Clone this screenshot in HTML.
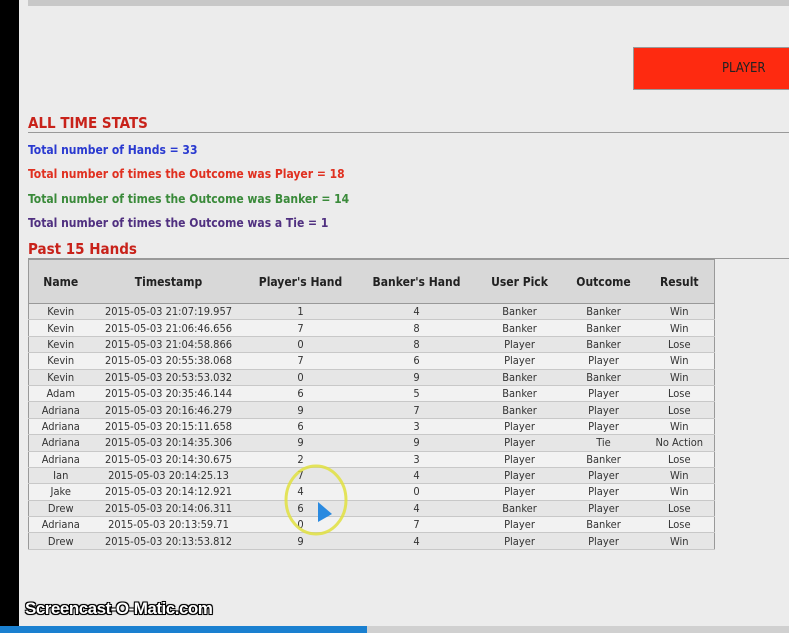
<!DOCTYPE html>
<html><head><style>
body{margin:0;width:789px;height:633px;background:#ececec;position:relative;overflow:hidden;font-family:"DejaVu Sans Condensed","Liberation Sans",sans-serif;}
.blk{position:absolute;left:0;top:0;width:19px;height:626px;background:#000}
.topbar{position:absolute;left:28px;top:0;width:761px;height:6px;background:#c8c8c8}
.btn{position:absolute;left:633px;top:47px;width:160px;height:43px;background:#fe2a10;border:1px solid #999;box-sizing:border-box;font-size:13px;color:#222;line-height:41px;padding-left:88px}
h2{position:absolute;left:28px;margin:0;font-size:15px;font-weight:bold;color:#c8221a}
.line{position:absolute;left:28px;right:0;height:1px;background:#999}
.s{position:absolute;left:28px;font-size:12px;font-weight:bold}
table{position:absolute;left:28px;top:259px;width:686px;table-layout:fixed;border-collapse:collapse;border:1px solid #999;font-size:11px;color:#333}
th{background:#d8d8d8;height:43px;font-weight:bold;color:#222;border-bottom:1px solid #999;font-size:12px;padding:0}
td{height:15.4px;padding:0;text-align:center;border-bottom:1px solid #c8c8c8;background:#f2f2f2;white-space:nowrap}
tr:nth-child(even) td{background:#e6e6e6}
.wm{position:absolute;left:25px;top:599px;font:bold 17px "Liberation Sans",sans-serif;color:#fff;text-shadow:0 0 2px #000,1px 1px 0 #000,-1px -1px 0 #000,1px -1px 0 #000,-1px 1px 0 #000;letter-spacing:-0.5px}
.bb{position:absolute;left:0;top:626px;width:789px;height:7px;background:#d0d0d0}
.bb div{width:367px;height:7px;background:#1a80d0}
</style></head><body>
<div class="blk"></div><div class="topbar"></div>
<div class="btn">PLAYER</div>
<h2 style="top:114px">ALL TIME STATS</h2>
<div class="line" style="top:132px"></div>
<div class="s" style="top:143px;color:#2a3ad0">Total number of Hands = 33</div>
<div class="s" style="top:167px;color:#e03020">Total number of times the Outcome was Player = 18</div>
<div class="s" style="top:192px;color:#3a8a3a">Total number of times the Outcome was Banker = 14</div>
<div class="s" style="top:216px;color:#503080">Total number of times the Outcome was a Tie = 1</div>
<h2 style="top:240px">Past 15 Hands</h2>
<div class="line" style="top:258px"></div>
<table>
<colgroup><col style="width:64px"><col style="width:152px"><col style="width:112px"><col style="width:120px"><col style="width:86px"><col style="width:82px"><col style="width:70px"></colgroup>
<tr><th>Name</th><th>Timestamp</th><th>Player's Hand</th><th>Banker's Hand</th><th>User Pick</th><th>Outcome</th><th>Result</th></tr>
<tr><td>Kevin</td><td>2015-05-03 21:07:19.957</td><td>1</td><td>4</td><td>Banker</td><td>Banker</td><td>Win</td></tr>
<tr><td>Kevin</td><td>2015-05-03 21:06:46.656</td><td>7</td><td>8</td><td>Banker</td><td>Banker</td><td>Win</td></tr>
<tr><td>Kevin</td><td>2015-05-03 21:04:58.866</td><td>0</td><td>8</td><td>Player</td><td>Banker</td><td>Lose</td></tr>
<tr><td>Kevin</td><td>2015-05-03 20:55:38.068</td><td>7</td><td>6</td><td>Player</td><td>Player</td><td>Win</td></tr>
<tr><td>Kevin</td><td>2015-05-03 20:53:53.032</td><td>0</td><td>9</td><td>Banker</td><td>Banker</td><td>Win</td></tr>
<tr><td>Adam</td><td>2015-05-03 20:35:46.144</td><td>6</td><td>5</td><td>Banker</td><td>Player</td><td>Lose</td></tr>
<tr><td>Adriana</td><td>2015-05-03 20:16:46.279</td><td>9</td><td>7</td><td>Banker</td><td>Player</td><td>Lose</td></tr>
<tr><td>Adriana</td><td>2015-05-03 20:15:11.658</td><td>6</td><td>3</td><td>Player</td><td>Player</td><td>Win</td></tr>
<tr><td>Adriana</td><td>2015-05-03 20:14:35.306</td><td>9</td><td>9</td><td>Player</td><td>Tie</td><td>No Action</td></tr>
<tr><td>Adriana</td><td>2015-05-03 20:14:30.675</td><td>2</td><td>3</td><td>Player</td><td>Banker</td><td>Lose</td></tr>
<tr><td>Ian</td><td>2015-05-03 20:14:25.13</td><td>7</td><td>4</td><td>Player</td><td>Player</td><td>Win</td></tr>
<tr><td>Jake</td><td>2015-05-03 20:14:12.921</td><td>4</td><td>0</td><td>Player</td><td>Player</td><td>Win</td></tr>
<tr><td>Drew</td><td>2015-05-03 20:14:06.311</td><td>6</td><td>4</td><td>Banker</td><td>Player</td><td>Lose</td></tr>
<tr><td>Adriana</td><td>2015-05-03 20:13:59.71</td><td>0</td><td>7</td><td>Player</td><td>Banker</td><td>Lose</td></tr>
<tr><td>Drew</td><td>2015-05-03 20:13:53.812</td><td>9</td><td>4</td><td>Player</td><td>Player</td><td>Win</td></tr>
</table>
<svg style="position:absolute;left:280px;top:462px" width="70" height="76"><ellipse cx="36" cy="38" rx="30" ry="34" fill="none" stroke="#e0e040" stroke-width="3" opacity="0.85"/><path d="M38 40 L38 60 L52 52 Z" fill="#2a8ae0"/></svg>
<div class="wm">Screencast-O-Matic.com</div>
<div class="bb"><div></div></div>
</body></html>
